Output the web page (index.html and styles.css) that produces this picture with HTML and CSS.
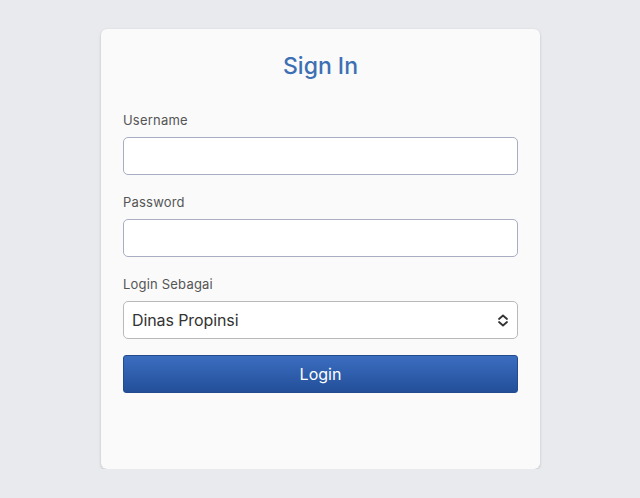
FILE: index.html
```html
<!DOCTYPE html>
<html>
	<head>
		<meta charset="UTF-8">
		<title>Sign In</title>
		<link rel="stylesheet" href="styles.css">
	</head>
	<body>
		<div class="card">
			<h1 class="title">Sign In</h1>
			<form class="form">
				<div class="field">
					<label class="label">Username</label>
					<input class="input" type="text">
				</div>
				<div class="field">
					<label class="label">Password</label>
					<input class="input" type="password">
				</div>
				<div class="field">
					<label class="label">Login Sebagai</label>
					<div class="select">
						<span class="select-text">Dinas Propinsi</span>
						<svg class="select-arrow" width="12" height="13" viewBox="0 0 12 13">
							<path d="M2 5 L6 1.5 L10 5 M2 8 L6 11.5 L10 8" fill="none" stroke="#333" stroke-width="1.8" stroke-linecap="round" stroke-linejoin="round"/>
						</svg>
					</div>
				</div>
				<button class="btn" type="button">Login</button>
			</form>
		</div>
	</body>
</html>
```

FILE: styles.css
```css
*{
	margin: 0;
	padding: 0;
	box-sizing: border-box;
}

body{
	background: #e9eaee;
	font-family: Inter, "Noto Sans", sans-serif;
	padding-top: 29px;
}

.card{ /*登录框*/
	width: 439px;
	height: 440px;
	margin-left: 101px;
	background: #fafafa;
	border-radius: 6px;
	box-shadow: 0 1px 3px rgba(0,0,0,0.18);
	padding: 22px 22px;
}

.title{
	text-align: center;
	font-size: 23px;
	font-weight: 500;
	line-height: 30px;
	color: #3d70b3;
	margin-bottom: 31px;
}

.form{
	display: flex;
	flex-direction: column;
	gap: 16px;
}

.field + .field{
	margin-top: 3px;
}

.field{
	display: flex;
	flex-direction: column;
	gap: 9px;
}

.label{
	font-size: 13px;
	line-height: 16px;
	color: #555555;
	font-weight: 400;
	letter-spacing: 0.2px;
}

.input, .select{
	height: 38px;
	width: 100%;
	border: 1px solid #a9adc2;
	border-radius: 5px;
	background: #ffffff;
	font-family: inherit;
}

.select{
	display: flex;
	align-items: center;
	justify-content: space-between;
	padding: 0 8px 0 8px;
	border-color: #b9b9bc;
}

.select-text{
	font-size: 16px;
	color: #333333;
	letter-spacing: -0.1px;
}

.btn{
	height: 38px;
	width: 100%;
	border: 1px solid #234b8e;
	border-radius: 3px;
	background: linear-gradient(#3b6dc0, #234f99);
	color: #ffffff;
	font-family: inherit;
	font-size: 16px;
}
```
